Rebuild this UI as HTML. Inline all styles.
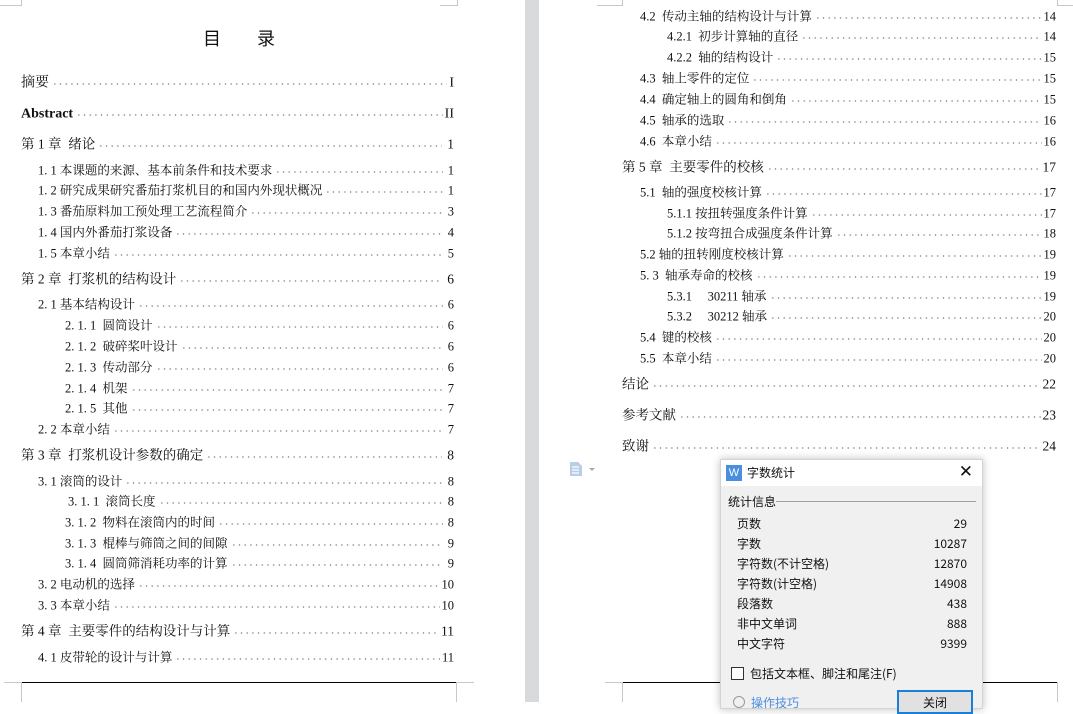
<!DOCTYPE html>
<html><head><meta charset="utf-8">
<style>
*{margin:0;padding:0;box-sizing:border-box}
body{width:1073px;height:702px;overflow:hidden;background:#fff;position:relative;font-family:"Liberation Serif","Noto Serif CJK SC","Noto Sans CJK SC",serif;color:#111}
.gap{position:absolute;left:525px;top:0;width:14px;height:702px;background:#d9dadc}
.r{position:absolute;display:flex;align-items:baseline;white-space:nowrap;font-size:12.5px;height:18px;line-height:18px;transform:translateY(1.5px)}
.r .t{padding-right:3px}
.r .f{flex:1;height:4px;align-self:baseline;background-image:radial-gradient(circle,#666 0.55px,transparent 0.85px);background-size:5.7px 3px;background-repeat:repeat-x;background-position:0 0}
.r .n{padding-left:2px}
.c{font-size:13.5px}
.L{right:619px}
.R{right:17px}
.ttl{position:absolute;left:203px;top:25px;font-size:18px;font-family:"Noto Sans CJK SC",sans-serif;letter-spacing:36px}
.ln{position:absolute;height:1px;background:#000}
.gl{position:absolute;background:#c8c8c8}
.dlg{position:absolute;left:720px;top:459px;width:263px;height:250px;background:#f0f0f0;border:1px solid #d4d4d4;box-shadow:0 0 8px rgba(0,0,0,.25);font-family:"Noto Sans CJK SC","Liberation Sans",sans-serif;font-size:12px;color:#111}
.dh{height:26px;background:#fff;position:relative}
.dh .ic{position:absolute;left:5px;top:5px;width:16px;height:16px;background:#4a8ee0;color:#fff;font-size:11px;line-height:16px;text-align:center;font-family:"Liberation Sans",sans-serif}
.dh .tt{position:absolute;left:26px;top:4px}
.dh .x{position:absolute;right:9px;top:2px;font-size:17px;font-family:"Liberation Sans",sans-serif}
.row{position:absolute;left:16px;width:230px;display:flex;justify-content:space-between;font-size:12px}
</style></head><body>
<div class="gap"></div>
<div class="gl" style="left:21px;top:0;width:1px;height:6px"></div>
<div class="gl" style="left:0;top:5px;width:21px;height:1px"></div>
<div class="gl" style="left:440px;top:5px;width:17px;height:1px"></div>
<div class="gl" style="left:457px;top:0;width:1px;height:6px"></div>
<div class="gl" style="left:622px;top:0;width:1px;height:6px"></div>
<div class="gl" style="left:597px;top:5px;width:25px;height:1px"></div>
<div class="gl" style="left:1057px;top:0;width:1px;height:6px"></div>
<div class="gl" style="left:1057px;top:5px;width:16px;height:1px"></div>

<div class="ttl">目录</div>

<div class="r c L" style="left:21px;top:73px;font-size:14px"><span class="t">摘要</span><span class="f"></span><span class="n">I</span></div>
<div class="r c L" style="left:21px;top:104px;font-size:14px"><b class="t">Abstract</b><span class="f"></span><span class="n">II</span></div>
<div class="r c L" style="left:21px;top:134px"><span class="t">第 1 章&nbsp; 绪论</span><span class="f"></span><span class="n">&nbsp;1</span></div>
<div class="r L" style="left:38px;top:160px"><span class="t">1. 1 本课题的来源、基本前条件和技术要求</span><span class="f"></span><span class="n">&nbsp;1</span></div>
<div class="r L" style="left:38px;top:180px"><span class="t">1. 2 研究成果研究番茄打浆机目的和国内外现状概况</span><span class="f"></span><span class="n">&nbsp;1</span></div>
<div class="r L" style="left:38px;top:201px"><span class="t">1. 3 番茄原料加工预处理工艺流程简介</span><span class="f"></span><span class="n">&nbsp;3</span></div>
<div class="r L" style="left:38px;top:222px"><span class="t">1. 4 国内外番茄打浆设备</span><span class="f"></span><span class="n">&nbsp;4</span></div>
<div class="r L" style="left:38px;top:243px"><span class="t">1. 5 本章小结</span><span class="f"></span><span class="n">&nbsp;5</span></div>
<div class="r c L" style="left:21px;top:269px"><span class="t">第 2 章&nbsp; 打浆机的结构设计</span><span class="f"></span><span class="n">&nbsp;6</span></div>
<div class="r L" style="left:38px;top:294px"><span class="t">2. 1 基本结构设计</span><span class="f"></span><span class="n">&nbsp;6</span></div>
<div class="r L" style="left:65px;top:315px"><span class="t">2. 1. 1&nbsp; 圆筒设计</span><span class="f"></span><span class="n">&nbsp;6</span></div>
<div class="r L" style="left:65px;top:336px"><span class="t">2. 1. 2&nbsp; 破碎桨叶设计</span><span class="f"></span><span class="n">&nbsp;6</span></div>
<div class="r L" style="left:65px;top:357px"><span class="t">2. 1. 3&nbsp; 传动部分</span><span class="f"></span><span class="n">&nbsp;6</span></div>
<div class="r L" style="left:65px;top:378px"><span class="t">2. 1. 4&nbsp; 机架</span><span class="f"></span><span class="n">&nbsp;7</span></div>
<div class="r L" style="left:65px;top:398px"><span class="t">2. 1. 5&nbsp; 其他</span><span class="f"></span><span class="n">&nbsp;7</span></div>
<div class="r L" style="left:38px;top:419px"><span class="t">2. 2 本章小结</span><span class="f"></span><span class="n">&nbsp;7</span></div>
<div class="r c L" style="left:21px;top:445px"><span class="t">第 3 章&nbsp; 打浆机设计参数的确定</span><span class="f"></span><span class="n">&nbsp;8</span></div>
<div class="r L" style="left:38px;top:471px"><span class="t">3. 1 滚筒的设计</span><span class="f"></span><span class="n">&nbsp;8</span></div>
<div class="r L" style="left:68px;top:491px"><span class="t">3. 1. 1&nbsp; 滚筒长度</span><span class="f"></span><span class="n">&nbsp;8</span></div>
<div class="r L" style="left:65px;top:512px"><span class="t">3. 1. 2&nbsp; 物料在滚筒内的时间</span><span class="f"></span><span class="n">&nbsp;8</span></div>
<div class="r L" style="left:65px;top:533px"><span class="t">3. 1. 3&nbsp; 棍棒与筛筒之间的间隙</span><span class="f"></span><span class="n">&nbsp;9</span></div>
<div class="r L" style="left:65px;top:553px"><span class="t">3. 1. 4&nbsp; 圆筒筛消耗功率的计算</span><span class="f"></span><span class="n">&nbsp;9</span></div>
<div class="r L" style="left:38px;top:574px"><span class="t">3. 2 电动机的选择</span><span class="f"></span><span class="n">10</span></div>
<div class="r L" style="left:38px;top:595px"><span class="t">3. 3 本章小结</span><span class="f"></span><span class="n">10</span></div>
<div class="r c L" style="left:21px;top:621px"><span class="t">第 4 章&nbsp; 主要零件的结构设计与计算</span><span class="f"></span><span class="n">11</span></div>
<div class="r L" style="left:38px;top:647px"><span class="t">4. 1 皮带轮的设计与计算</span><span class="f"></span><span class="n">11</span></div>

<div class="r R" style="left:640px;top:6px"><span class="t">4.2&nbsp; 传动主轴的结构设计与计算</span><span class="f"></span><span class="n">14</span></div>
<div class="r R" style="left:667px;top:26px"><span class="t">4.2.1&nbsp; 初步计算轴的直径</span><span class="f"></span><span class="n">14</span></div>
<div class="r R" style="left:667px;top:47px"><span class="t">4.2.2&nbsp; 轴的结构设计</span><span class="f"></span><span class="n">15</span></div>
<div class="r R" style="left:640px;top:68px"><span class="t">4.3&nbsp; 轴上零件的定位</span><span class="f"></span><span class="n">15</span></div>
<div class="r R" style="left:640px;top:89px"><span class="t">4.4&nbsp; 确定轴上的圆角和倒角</span><span class="f"></span><span class="n">15</span></div>
<div class="r R" style="left:640px;top:110px"><span class="t">4.5&nbsp; 轴承的选取</span><span class="f"></span><span class="n">16</span></div>
<div class="r R" style="left:640px;top:131px"><span class="t">4.6&nbsp; 本章小结</span><span class="f"></span><span class="n">16</span></div>
<div class="r c R" style="left:622px;top:157px"><span class="t">第 5 章&nbsp; 主要零件的校核</span><span class="f"></span><span class="n">17</span></div>
<div class="r R" style="left:640px;top:182px"><span class="t">5.1&nbsp; 轴的强度校核计算</span><span class="f"></span><span class="n">17</span></div>
<div class="r R" style="left:667px;top:203px"><span class="t">5.1.1 按扭转强度条件计算</span><span class="f"></span><span class="n">17</span></div>
<div class="r R" style="left:667px;top:223px"><span class="t">5.1.2 按弯扭合成强度条件计算</span><span class="f"></span><span class="n">18</span></div>
<div class="r R" style="left:640px;top:244px"><span class="t">5.2 轴的扭转刚度校核计算</span><span class="f"></span><span class="n">19</span></div>
<div class="r R" style="left:640px;top:265px"><span class="t">5. 3&nbsp; 轴承寿命的校核</span><span class="f"></span><span class="n">19</span></div>
<div class="r R" style="left:667px;top:286px"><span class="t">5.3.1&nbsp;&nbsp;&nbsp;&nbsp; 30211 轴承</span><span class="f"></span><span class="n">19</span></div>
<div class="r R" style="left:667px;top:306px"><span class="t">5.3.2&nbsp;&nbsp;&nbsp;&nbsp; 30212 轴承</span><span class="f"></span><span class="n">20</span></div>
<div class="r R" style="left:640px;top:327px"><span class="t">5.4&nbsp; 键的校核</span><span class="f"></span><span class="n">20</span></div>
<div class="r R" style="left:640px;top:348px"><span class="t">5.5&nbsp; 本章小结</span><span class="f"></span><span class="n">20</span></div>
<div class="r c R" style="left:622px;top:374px"><span class="t">结论</span><span class="f"></span><span class="n">22</span></div>
<div class="r c R" style="left:622px;top:405px"><span class="t">参考文献</span><span class="f"></span><span class="n">23</span></div>
<div class="r c R" style="left:622px;top:436px"><span class="t">致谢</span><span class="f"></span><span class="n">24</span></div>

<svg style="position:absolute;left:569px;top:461px" width="30" height="16"><path d="M1 1h8l4 4v10H1z" fill="#b9cde6"/><path d="M3 6h7M3 9h7M3 12h7" stroke="#fff" stroke-width="1.3"/><path d="M20 7h6l-3 3z" fill="#aaa"/></svg>

<div class="ln" style="left:21px;top:682px;width:436px"></div>
<div class="gl" style="left:4px;top:682px;width:17px;height:1px"></div>
<div class="gl" style="left:21px;top:682px;width:1px;height:20px"></div>
<div class="gl" style="left:457px;top:682px;width:17px;height:1px"></div>
<div class="gl" style="left:456px;top:682px;width:1px;height:20px"></div>
<div class="ln" style="left:622px;top:682px;width:436px"></div>
<div class="gl" style="left:605px;top:682px;width:17px;height:1px"></div>
<div class="gl" style="left:622px;top:682px;width:1px;height:20px"></div>
<div class="gl" style="left:1057px;top:682px;width:1px;height:20px"></div>

<div class="dlg">
 <div class="dh"><div class="ic">W</div><div class="tt">字数统计</div><div class="x">✕</div></div>
 <div style="position:absolute;left:7px;top:33px">统计信息</div>
 <div style="position:absolute;left:55px;top:41px;width:200px;height:1px;background:#a0a0a0"></div>
 <div class="row" style="top:55px"><span>页数</span><span>29</span></div>
 <div class="row" style="top:75px"><span>字数</span><span>10287</span></div>
 <div class="row" style="top:95px"><span>字符数(不计空格)</span><span>12870</span></div>
 <div class="row" style="top:115px"><span>字符数(计空格)</span><span>14908</span></div>
 <div class="row" style="top:135px"><span>段落数</span><span>438</span></div>
 <div class="row" style="top:155px"><span>非中文单词</span><span>888</span></div>
 <div class="row" style="top:175px"><span>中文字符</span><span>9399</span></div>
 <div style="position:absolute;left:10px;top:207px;width:13px;height:13px;border:1px solid #333;background:#fff"></div>
 <div style="position:absolute;left:29px;top:205px">包括文本框、脚注和尾注(F)</div>
 <div style="position:absolute;left:12px;top:236px;width:12px;height:12px;border:1px solid #999;border-radius:50%"></div>
 <div style="position:absolute;left:30px;top:234px;color:#4a8ee0">操作技巧</div>
 <div style="position:absolute;left:176px;top:230px;width:76px;height:24px;border:2px solid #1a7fd8;background:#e1e1e1;text-align:center;padding-top:2px">关闭</div>
</div>
</body></html>
